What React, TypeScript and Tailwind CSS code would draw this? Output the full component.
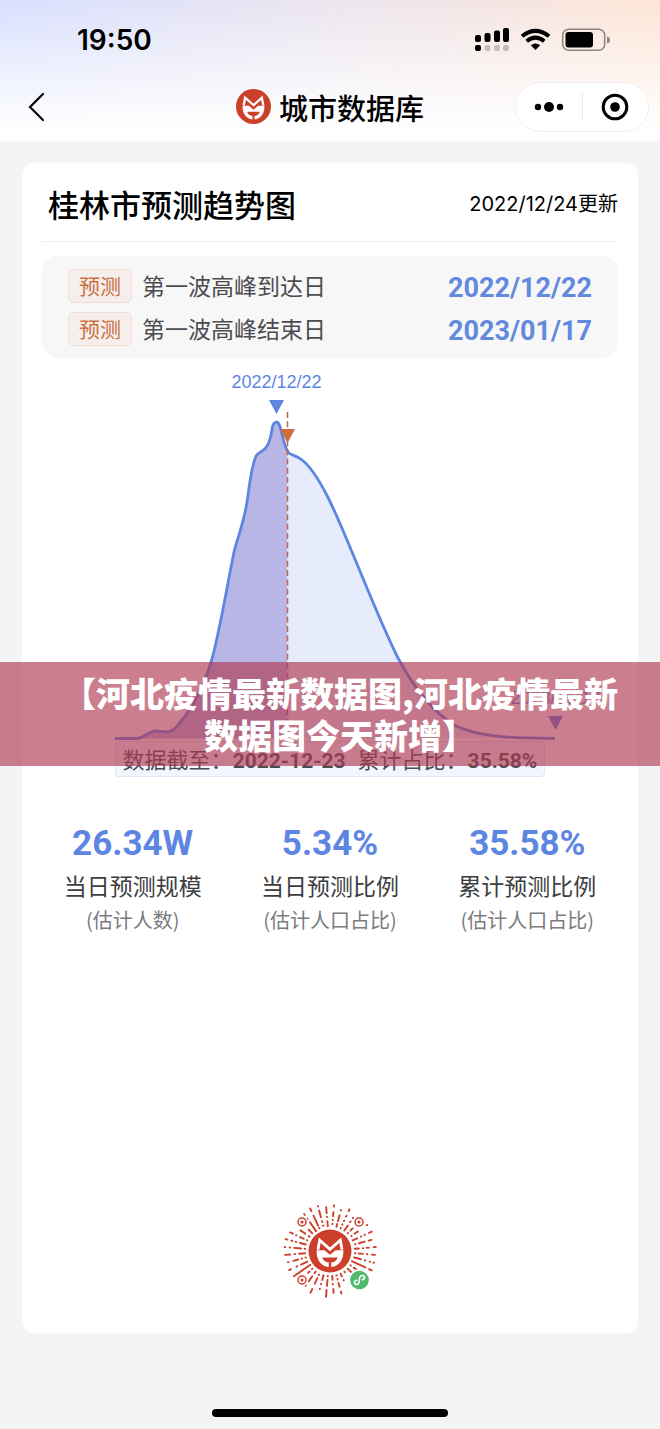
const CJK = "font-['Noto_Sans_CJK_SC',sans-serif]";
const NUM = "font-['Roboto','Noto_Sans_CJK_SC',sans-serif]";
const LATIN = "font-['Inter','Noto_Sans_CJK_SC',sans-serif]";

const peaks = [
  { label: '第一波高峰到达日', date: '2022/12/22' },
  { label: '第一波高峰结束日', date: '2023/01/17' },
];

const stats = [
  { value: '26.34W', label: '当日预测规模', note: '(估计人数)' },
  { value: '5.34%', label: '当日预测比例', note: '(估计人口占比)' },
  { value: '35.58%', label: '累计预测比例', note: '(估计人口占比)' },
];

function FoxMark() {
  return (
    <>
      <circle cx="50" cy="50" r="50" fill="#cc3f2b" />
      <path d="M22 47 L26 25 L50 46 L74 25 L78 47" fill="none" stroke="#fff" strokeWidth="6.500" strokeMiterlimit="8" />
      <path d="M19 48 H37 L50 59 L63 48 H81 C82 68 73 85 53 87 V76 H47 V87 C27 85 18 68 19 48 Z" fill="#fff" />
      <path d="M32 65 H68 C66 72 61 76 53 77 H47 C39 76 34 72 32 65 Z" fill="#cc3f2b" />
    </>
  );
}

function StatusIcons() {
  return (
    <svg className="h-7 w-[136px]" viewBox="0 0 136 28" aria-hidden="true">
      <g fill="#000">
        <rect x="0" y="9" width="6" height="7" rx="2" />
        <rect x="9.5" y="7" width="6" height="9" rx="2" />
        <rect x="19" y="4.500" width="6" height="11.500" rx="2" />
        <rect x="28" y="2" width="6" height="14" rx="2" />
        <rect x="0" y="19" width="6" height="6" rx="2" />
      </g>
      <g fill="#000" opacity=".2">
        <rect x="9.5" y="19" width="6" height="6" rx="2" />
        <rect x="19" y="19" width="6" height="6" rx="2" />
        <rect x="28" y="19" width="6" height="6" rx="2" />
      </g>
      <g fill="none" stroke="#000" strokeWidth="4">
        <path d="M47 10.200 Q60.500 -.5 74 10.200" />
        <path d="M51.700 15.200 Q60.500 8 69.300 15.200" />
      </g>
      <path d="M60.500 24 L55.800 19.300 Q60.500 15.500 65.200 19.300 Z" fill="#000" />
      <rect x="87.700" y="3.200" width="42" height="21" rx="6" fill="none" stroke="#8d8684" strokeWidth="1.600" />
      <rect x="90.500" y="6" width="27.500" height="15.500" rx="3" fill="#000" />
      <path d="M132 10.500 Q135 11 135 14 Q135 17 132 17.500 Z" fill="#8d8684" />
    </svg>
  );
}

function TrendChart() {
  const curve =
    'M115 738.500 H137 C145 738 147 731 157 731 C166 732 171 734 178 725 C190 711 203 690 212 659 C219 634 226 592 234 552 C238 536 244 522 247 502 C250 482 251 468 256 456 C260 450 265 453 269 442 C273 432 271 423 276 422 C282 422 281 440 288 452 C291 456 297 455 302 460 C319 473 336 513 352 552 C368 590 382 626 398 658 C412 684 430 711 456 726 C482 738 515 738 555 738.500';
  return (
    <svg className="block h-auto w-full" viewBox="42 366 576 375" role="img" aria-label="预测趋势图">
      <defs>
        <clipPath id="past"><rect x="42" y="366" width="245.500" height="375" /></clipPath>
        <clipPath id="future"><rect x="287.500" y="366" width="331" height="375" /></clipPath>
      </defs>
      <path d={curve + ' Z'} fill="#b7b6e4" clipPath="url(#past)" />
      <path d={curve + ' Z'} fill="#e6ecfb" clipPath="url(#future)" />
      <path d={curve} fill="none" stroke="#5d85e2" strokeWidth="2.800" strokeLinejoin="round" />
      <path d="M287.500 412 V739" stroke="#c4664a" strokeWidth="1.500" strokeDasharray="6 3.300" />
      <path d="M269 400 H284 L276.500 414 Z" fill="#5d85e2" />
      <path d="M280 429 H295 L287.500 443 Z" fill="#cb6e3c" />
      <path d="M548 716 H563 L555.500 730 Z" fill="#5d85e2" />
      <g className="font-['Liberation_Sans',sans-serif]" fontSize="18" fill="#5d85e2" textAnchor="middle">
        <text x="276.500" y="388">2022/12/22</text>
        <text x="555.500" y="704">2023/01/17</text>
      </g>
    </svg>
  );
}

// One entry per ray, clockwise from the top; each mark is [start radius, end radius].
const rays: number[][][] = [
  [[27, 27.500], [31, 31.500], [35, 39], [44.500, 46]],
  [[25, 28], [31, 37], [42, 42.500]],
  [[25, 25.500], [29, 29.500], [33, 33.500], [38, 39], [44, 46]],
  [[25, 31], [35, 36], [40, 40.500]],
  [[25, 25.500], [29, 32]],
  [[26, 26.500], [30, 34], [45, 45.500]],
  [[25, 30], [34, 34.500], [38, 38.500], [43, 46]],
  [[26, 26.500], [30, 36], [40, 43]],
  [[25, 29], [33, 33.500], [37, 39], [44, 46]],
  [[25, 25.500], [29, 33], [37, 37.500], [42, 45]],
  [[25, 32], [36, 36.500], [41, 41.500], [45, 45.500]],
  [[24, 39], [43, 46]],
  [[25, 25.500], [29, 34], [38, 38.500]],
  [[25, 31]],
  [[25, 26]],
  [[25, 28], [32, 32.500]],
  [[25, 25.500], [29, 29.500], [33, 37], [42, 44]],
  [[25, 29], [33, 33.500], [38, 42]],
  [[25, 25.500], [29, 35], [39, 46]],
  [[25, 30], [34, 34.500], [39, 39.500]],
  [[26, 26.500], [30, 36], [42, 46]],
  [[25, 27], [31, 37], [42, 42.500]],
  [[25, 25.500], [29, 31]],
  [[24, 44]],
  [[25, 32], [36, 37], [43, 45]],
  [[25, 25.500], [29, 29.500], [33, 38], [43, 43.500]],
  [[25, 31], [35, 35.500], [40, 45]],
  [[25, 25.500], [29, 36], [40, 40.500], [45, 45.500]],
  [[25, 31], [35, 35.500], [39, 40], [44, 46]],
  [[25, 25.500], [29, 33], [37, 37.500], [41, 44]],
  [[25, 26], [30, 36]],
  [[25, 30]],
  [[24, 35], [39, 39.500], [44, 45]],
  [[25, 25.500], [28, 39], [44, 47]],
  [[26, 26.500], [30, 31], [35, 42], [46, 46.500]],
  [[25, 30], [34, 34.500], [38, 44]],
];

function MiniProgramCode() {
  return (
    <svg className="size-24" viewBox="-48 -48 96 96" role="img" aria-label="小程序码">
      <g stroke="#cc3f2b" strokeWidth="1.900" strokeLinecap="round">
        {rays.map((marks, i) =>
          marks.map(([from, to]) => (
            <line key={i + '-' + from} x1="0" x2="0" y1={-from} y2={-to} transform={`rotate(${i * 10 + 5})`} />
          )),
        )}
      </g>
      {[[-28, -29], [29, -29], [-28, 29]].map(([x, y]) => (
        <g key={x + ',' + y} transform={`translate(${x} ${y})`}>
          <circle r="6" fill="#fff" />
          <circle r="4" fill="none" stroke="#cc3f2b" strokeWidth="1.500" />
          <circle r="1.600" fill="#cc3f2b" />
        </g>
      ))}
      <circle r="23" fill="#fff" />
      <g transform="translate(-21.500 -21.500) scale(.43)"><FoxMark /></g>
      <circle cx="29.500" cy="29" r="11" fill="#fff" />
      <circle cx="29.500" cy="29" r="9.300" fill="#4fba6b" />
      <path d="M26.800 29.300 C23.300 30 24 34 27 33.500 C29.300 33 29.300 31 29.300 29 C29.300 27 29.500 25 31.800 24.500 C35 24 35.800 28 32.200 28.800" fill="none" stroke="#fff" strokeWidth="1.600" strokeLinecap="round" />
    </svg>
  );
}

export default function App() {
  return (
    <div className={`relative flex min-h-screen flex-col bg-[#f3f5f5] text-black ${CJK}`}>
      <header className="bg-[linear-gradient(to_bottom,transparent,#ffffff_92%),linear-gradient(to_right,#d8dfff,#ebe5ef_50%,#fde5d6)] pb-2">
        <div className="flex h-20 items-center justify-between pr-[49px] pl-[77px]">
          <span className={`text-[28px] leading-8 font-semibold ${LATIN}`}>19:50</span>
          <StatusIcons />
        </div>
        <div className="grid h-[53px] grid-cols-[1fr_auto_1fr] items-center">
          <button type="button" aria-label="返回" className="ml-6 flex size-8 items-center">
            <svg className="h-8 w-6" viewBox="0 0 24 32" fill="none" stroke="#000" strokeWidth="2.200" strokeLinecap="round" aria-hidden="true">
              <path d="M19 3 L6 16 L19 29" />
            </svg>
          </button>
          <h1 className="flex items-center gap-2 text-[29px] leading-10 font-medium">
            <svg className="size-[35px]" viewBox="0 0 100 100" aria-hidden="true"><FoxMark /></svg>
            城市数据库
          </h1>
          <div className="mr-[11px] flex h-[50px] w-[134px] items-center justify-self-end rounded-full border border-[#f3f0ef] bg-white">
            <button type="button" aria-label="更多" className="flex flex-1 justify-center">
              <svg className="h-3 w-8" viewBox="0 0 32 12" aria-hidden="true">
                <circle cx="5" cy="6" r="3.200" /><circle cx="16" cy="6" r="5" /><circle cx="27" cy="6" r="3.200" />
              </svg>
            </button>
            <span className="h-7 w-px bg-[#e8e8e8]" />
            <button type="button" aria-label="关闭" className="flex flex-1 justify-center">
              <svg className="size-7" viewBox="0 0 28 28" aria-hidden="true">
                <circle cx="14" cy="14" r="11.800" fill="none" stroke="#000" strokeWidth="3" />
                <circle cx="14" cy="14" r="4.800" />
              </svg>
            </button>
          </div>
        </div>
      </header>

      <main className="mx-[22px] mt-[22px] flex flex-col rounded-xl bg-white px-5 pb-[34px]">
        <div className="flex items-center justify-between border-b border-[#ececec] pt-4 pb-3 pl-[6px]">
          <h2 className="text-[31px] leading-[50px] font-medium">桂林市预测趋势图</h2>
          <span className={`text-[20px] leading-8 ${LATIN}`}>2022/12/24更新</span>
        </div>

        <dl className="mt-[14px] flex flex-col gap-[9px] rounded-2xl bg-[#f7f7f7] px-[26px] pt-[13px] pb-3">
          {peaks.map((p) => (
            <div key={p.date} className="flex h-[34px] items-center justify-between">
              <dt className="flex items-center gap-[10px] text-[23px] leading-8 text-[#4c4c50]">
                <span className="flex h-[34px] w-16 items-center justify-center rounded-md border border-[#f3ddd2] bg-[#f5eeeb] pb-[2px] text-[21px] text-[#c96f3f]">预测</span>
                <span className="pb-[2px]">{p.label}</span>
              </dt>
              <dd className={`pt-1 text-[27px] leading-8 font-bold text-[#6389de] ${NUM}`}>{p.date}</dd>
            </div>
          ))}
        </dl>

        <div className="mt-2">
          <TrendChart />
        </div>
        <p className="flex h-9 items-center self-center rounded-sm border border-[#dbe6f7] bg-[#f2f6fe] px-[7px] text-[22px] leading-8 whitespace-nowrap text-[#4c4c50]">
          <span>数据截至：<b className={`text-[21px] ${NUM}`}>2022-12-23</b></span>
          <span className="ml-3">累计占比：<b className={`text-[21px] ${NUM}`}>35.58%</b></span>
        </p>

        <div className="-mx-2 mt-[45px] grid grid-cols-3 text-center">
          {stats.map((s) => (
            <div key={s.label} className="flex flex-col">
              <strong className={`text-[35px] leading-[44px] font-bold text-[#5d85e2] ${NUM}`}>{s.value}</strong>
              <span className="text-[23px] leading-[38px] text-[#3e3e42]">{s.label}</span>
              <span className="text-[20px] leading-8 text-[#7b7b7e]">{s.note}</span>
            </div>
          ))}
        </div>

        <div className="mt-[267px] flex justify-center">
          <MiniProgramCode />
        </div>
      </main>

      <footer className="flex flex-1 items-end justify-center pt-[75px] pb-3">
        <div className="h-2 w-[236px] rounded-full bg-black" />
      </footer>

      <div className="absolute inset-x-0 top-[662px] flex h-[104px] justify-center bg-[#af3951]/65 pt-[10px] pr-10 pl-[60px]">
        <p className="text-center text-[34px] leading-[42px] font-black text-white">
          【河北疫情最新数据图,河北疫情最新<br />数据图今天新增】
        </p>
      </div>
    </div>
  );
}
